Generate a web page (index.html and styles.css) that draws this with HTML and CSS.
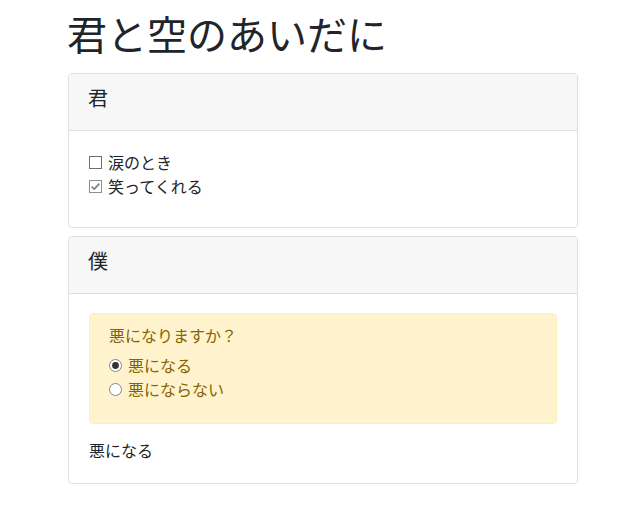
FILE: index.html
```html
<!DOCTYPE html>
<html lang="ja">
<head>
<meta charset="utf-8">
<title>君と空のあいだに</title>
<link rel="stylesheet" href="styles.css">
</head>
<body>
<div class="container">
  <h1 class="title">君と空のあいだに</h1>

  <div class="card">
    <div class="card-header">君</div>
    <div class="card-body">
      <div class="group">
        <label class="check">
          <span class="box">
            <svg width="13" height="13" viewBox="0 0 13 13"><rect x="0.5" y="0.5" width="12" height="12" fill="#fff" stroke="#6f6f6f"/></svg>
          </span>
          <span>涙のとき</span>
        </label>
        <label class="check">
          <span class="box">
            <svg width="13" height="13" viewBox="0 0 13 13"><rect x="0.5" y="0.5" width="12" height="12" fill="#fff" stroke="#8f8f8f"/><path d="M2.6 6.6 L5.2 9.1 L10.4 3.6" fill="none" stroke="#808080" stroke-width="1.7"/></svg>
          </span>
          <span>笑ってくれる</span>
        </label>
      </div>
    </div>
  </div>

  <div class="card">
    <div class="card-header">僕</div>
    <div class="card-body card-body-last">
      <div class="alert">
        <div class="question">悪になりますか？</div>
        <div class="group">
          <label class="check">
            <span class="box">
              <svg width="13" height="13" viewBox="0 0 13 13"><circle cx="6.5" cy="6.5" r="6" fill="#fff" stroke="#858585"/><circle cx="6.5" cy="6.5" r="3.4" fill="#333"/></svg>
            </span>
            <span>悪になる</span>
          </label>
          <label class="check">
            <span class="box">
              <svg width="13" height="13" viewBox="0 0 13 13"><circle cx="6.5" cy="6.5" r="6" fill="#fff" stroke="#858585"/></svg>
            </span>
            <span>悪にならない</span>
          </label>
        </div>
      </div>
      <div class="result">悪になる</div>
    </div>
  </div>
</div>
</body>
</html>
```
FILE: styles.css
```css
* { box-sizing: border-box; }
html, body { margin: 0; padding: 0; background: #fff; }
body {
  font-family: "Noto Sans CJK JP", "Noto Sans", sans-serif;
  font-size: 16px;
  line-height: 24px;
  color: #212529;
}
.container {
  max-width: 543px;
  margin: 0 auto;
  padding: 0 15px 0 18px;
}
.title {
  font-size: 40px;
  font-weight: 400;
  line-height: 48px;
  margin: 9px 0 16px -1px;
  color: #212529;
}
.card {
  border: 1px solid #dfdfdf;
  border-radius: 4px;
  margin-bottom: 8px;
  overflow: hidden;
}
.card-header {
  background: #f7f7f7;
  border-bottom: 1px solid #dfdfdf;
  padding: 8px 20px 16px 19px;
  font-size: 20px;
  line-height: 32px;
}
.card-body {
  padding: 19px 20px;
}
.card-body-last {
  padding-bottom: 21px;
}
.group {
  display: flex;
  flex-direction: column;
  margin-bottom: 10px;
}
.check {
  display: flex;
  align-items: center;
  gap: 6px;
  line-height: 24px;
}
.box {
  display: flex;
  width: 13px;
  height: 13px;
}
.alert {
  background: #fff3cd;
  border: 1px solid #ffeeba;
  border-radius: 4px;
  color: #856404;
  padding: 9px 20px 12px 19px;
  margin-bottom: 14px;
}
.question {
  margin-bottom: 6px;
}
.result {
  line-height: 24px;
}
```
